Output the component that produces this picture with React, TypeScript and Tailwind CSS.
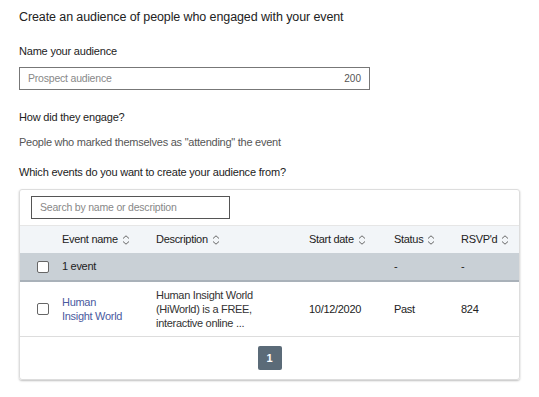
import React from "react";

const Sort = () => (
  <svg width="8" height="10" viewBox="0 0 8 10" className="ml-[4px] inline-block" fill="none" stroke="#666" strokeWidth="1">
    <path d="M1 3.5 L4 0.8 L7 3.5" />
    <path d="M1 6.5 L4 9.2 L7 6.5" />
  </svg>
);

const Box = () => <span className="block h-[12px] w-[12px] rounded-[2px] border border-[#666] bg-white" />;

const cols = "grid grid-cols-[42px_94px_153px_85px_67px_1fr]";

export default function App() {
  return (
    <div className="h-[397px] w-[539px] bg-white px-[19px] pt-[9px] text-[#222]" style={{ fontFamily: '"Liberation Sans", Arial, sans-serif' }}>
      <h1 className="text-[12.5px] leading-[16px] tracking-[-0.1px]">Create an audience of people who engaged with your event</h1>

      <p className="mt-[19px] text-[11px] leading-[15px] tracking-[-0.2px]">Name your audience</p>
      <div className="mt-[8px] flex h-[23px] w-[351px] items-center justify-between border border-[#777] px-[8px]">
        <span className="text-[10.5px] tracking-[-0.2px] text-[#888]">Prospect audience</span>
        <span className="text-[10px] text-[#555]">200</span>
      </div>

      <p className="mt-[20px] text-[11px] leading-[15px] tracking-[-0.2px]">How did they engage?</p>
      <p className="mt-[10px] text-[11px] leading-[14px] tracking-[-0.25px] text-[#555]">People who marked themselves as "attending" the event</p>

      <p className="mt-[16px] text-[11px] leading-[15px] tracking-[-0.2px]">Which events do you want to create your audience from?</p>

      <div className="mt-[9px] w-[501px] rounded-[3px] border border-[#ddd] shadow-[0_1px_2px_rgba(0,0,0,0.25)]">
        <div className="px-[11px] pb-[6px] pt-[6px]">
          <div className="flex h-[23px] w-[199px] items-center border border-[#555] px-[8px] text-[10.5px] tracking-[-0.2px] text-[#888]">
            Search by name or description
          </div>
        </div>

        <div className={`${cols} h-[28px] items-center border-t border-[#e6e6e6] bg-[#f2f5f8] text-[11px] tracking-[-0.3px]`}>
          <span />
          <span className="flex items-center">Event name <Sort /></span>
          <span className="flex items-center">Description <Sort /></span>
          <span className="flex items-center">Start date <Sort /></span>
          <span className="flex items-center">Status <Sort /></span>
          <span className="flex items-center">RSVP'd <Sort /></span>
        </div>

        <div className={`${cols} h-[29px] items-center border-b-2 border-[#a9b1b9] bg-[#c9d0d6] text-[11px] tracking-[-0.3px]`}>
          <span className="pl-[17px]"><Box /></span>
          <span>1 event</span>
          <span />
          <span />
          <span>-</span>
          <span>-</span>
        </div>

        <div className={`${cols} h-[55px] items-center border-b border-[#ddd] text-[11px] tracking-[-0.3px]`}>
          <span className="pl-[17px]"><Box /></span>
          <span className="leading-[14px] text-[#4a5aa0]">Human<br />Insight World</span>
          <span className="pr-[10px] leading-[14px] text-[#333]">Human Insight World (HiWorld) is a FREE, interactive online ...</span>
          <span>10/12/2020</span>
          <span>Past</span>
          <span>824</span>
        </div>

        <div className="flex h-[42px] items-center justify-center">
          <span className="flex h-[24px] w-[24px] items-center justify-center rounded-[2px] bg-[#5b6b78] text-[11px] font-bold text-white">1</span>
        </div>
      </div>
    </div>
  );
}
